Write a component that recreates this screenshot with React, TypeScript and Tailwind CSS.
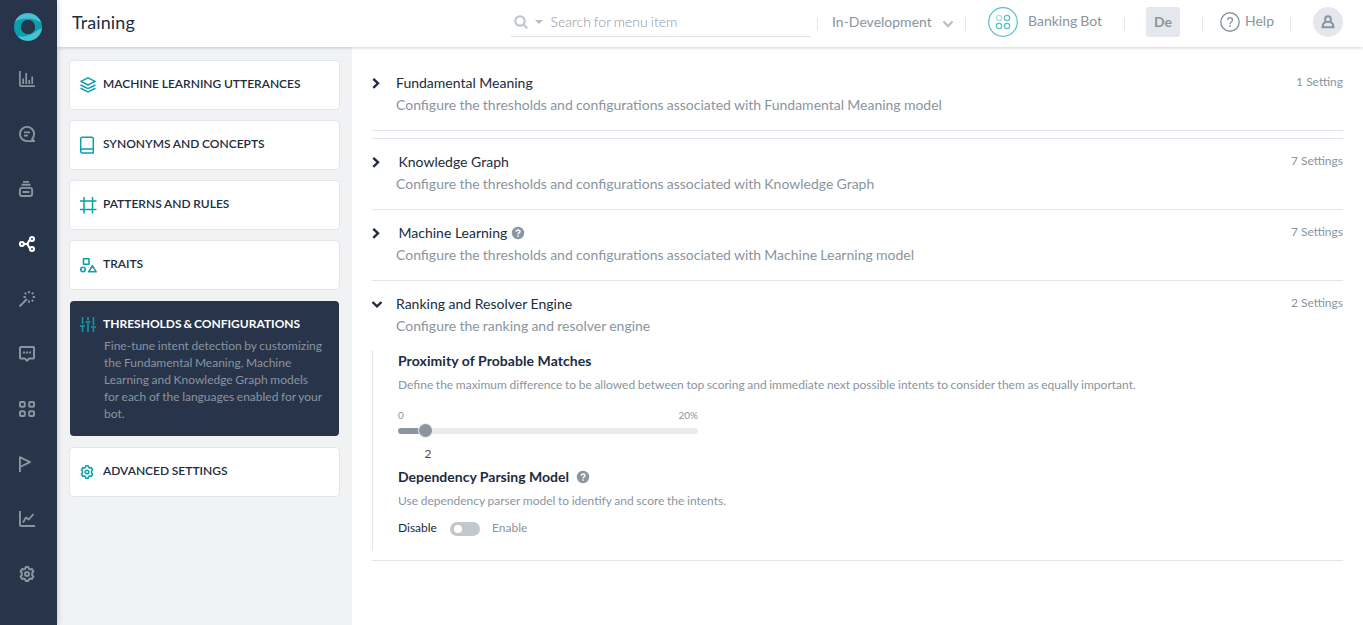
import React from "react";

type IconProps = { children: React.ReactNode; size?: string; sw?: number };

function Icon({ children, size = "size-4", sw = 1.8 }: IconProps) {
  return (
    <svg viewBox="0 0 16 16" className={`${size} block shrink-0 overflow-visible`} fill="none" stroke="currentColor" strokeWidth={sw} strokeLinejoin="round">
      {children}
    </svg>
  );
}

const gear = (
  <>
    <path d="M6.2 2.7 6.7 .9h2.6l.5 1.8 1.3.8 1.8-.5 1.500 2.500-1.200 1.300v2.400l1.200 1.300-1.500 2.500-1.800-.5-1.300.8-.5 1.800H6.700l-.5-1.800-1.300-.8-1.800.5-1.500-2.500 1.200-1.300V6.800L1.600 5.500 3.100 3l1.800.5z" />
    <circle cx="8" cy="8" r="2" />
  </>
);

const navIcons: React.ReactNode[] = [
  <Icon sw={1.7}><path d="M.9 0v14q0 1.200 1.200 1.200H16M4.200 13V7.500M7.200 13V2M10.200 13V9M13.200 13V5.500" /></Icon>,
  <Icon sw={1.9}><path d="M15.200 15.100H8A7.100 7.100 0 1 1 15.100 8c0 2-.8 3.700-2 5zM5 6.400h6M5 9.600h4" /></Icon>,
  <Icon sw={1.9}><path d="M4 .9h6M2.500 3.700h9M3 6.900h8q2.100 0 2.100 2.100v3.900q0 2.100-2.100 2.100H3Q.9 15 .9 12.900V9Q.9 6.900 3 6.900zM3.500 11h7" /></Icon>,
  <Icon sw={2.100}><circle cx="2.900" cy="8" r="2" /><circle cx="13" cy="3" r="2" /><circle cx="13" cy="13" r="2" /><path d="M5 8h3.500M11.200 3.800C9.500 4.500 9.500 6 8.500 8c1 2 1 3.500 2.700 4.200" /></Icon>,
  <Icon sw={1.900}><path d="M.5 15.500 8 8M10 0v2.200M10 9.500v2.300M4.500 6h2.300M13.700 6H16M5.700 1.700l1.500 1.500M14.300 1.700l-1.500 1.500M14.300 10.300l-1.500-1.500" /></Icon>,
  <Icon sw={2}><path d="M1.600 1h12.800l.6.600v10.400l-.6.600H10L8 14.700 6 12.600H1.600L1 12V1.600z" /><path d="M4 6.500h2M7 6.500h2M10 6.500h2" /></Icon>,
  <Icon sw={2}><rect x="1" y="1" width="4.800" height="4.800" rx="1" /><rect x="10.200" y="1" width="4.800" height="4.800" rx="1" /><rect x="1" y="10.200" width="4.800" height="4.800" rx="1" /><rect x="10.200" y="10.200" width="4.800" height="4.800" rx="1" /></Icon>,
  <Icon sw={1.9}><path d="M.95 16V1.200L11 6.200.95 11" /></Icon>,
  <Icon sw={1.9}><path d="M.95 0v13.900q0 1.150 1.150 1.150H16M4 11.500l3-5 2.700 2L14.500 3" /></Icon>,
  <Icon sw={2}>{gear}</Icon>,
];

function Logo() {
  return (
    <svg viewBox="0 0 28 28" className="size-7 shrink-0">
      <circle cx="14" cy="14" r="10.500" fill="none" stroke="#09a0ae" strokeWidth="7" />
      <path d="M1 8.500C5-.5 17-2.500 24 4.500c1.500 1.500 2.500 3.300 3 5C23 7 18 5.500 13 5.500 8.500 5.500 4 6.500 1 8.500z" fill="#4cc0d3" />
      <path d="M27.800 15.500C27 24 18 30 9 27c-2-.7-3.700-2-5-3.500 5 .5 11-.5 15.500-3.500 3.500-2.300 6-4 8.300-4.500z" fill="#4cc0d3" />
      <circle cx="14" cy="14" r="7" fill="#27344a" />
    </svg>
  );
}

type Item = { label: string; icon: React.ReactNode };

const items: Item[] = [
  { label: "MACHINE LEARNING UTTERANCES", icon: <Icon sw={1.500}><path d="M8 .8 15.100 4.400 8 8 .9 4.400zM.5 8 8 11.600 15.500 8M.5 11.300 8 14.900l7.500-3.600" /></Icon> },
  { label: "SYNONYMS AND CONCEPTS", icon: <Icon sw={1.500}><path d="M2.200.3h9.600q1.500 0 1.500 1.500V16H2.200Q.7 16 .7 14.500V1.800Q.7.3 2.200.3zM.7 14q0-2 2-2h10.600" /></Icon> },
  { label: "PATTERNS AND RULES", icon: <Icon sw={1.500}><path d="M4 0v16.500M12.500 0v16.500M0 4h16.500M0 12.500h16.500" /></Icon> },
  { label: "TRAITS", icon: <Icon sw={1.600}><rect x="3.500" y="1.700" width="5.500" height="5.500" /><circle cx="3" cy="12.500" r="2.200" /><path d="m12.500 8.800 3.700 6H8.700z" /></Icon> },
];

function Card({ item }: { item: Item }) {
  return (
    <div className="flex h-[50px] w-[271px] items-center rounded border border-[#e4e5ec] bg-white pl-2.5 text-[#202c40]">
      <span className="w-[23px] text-[#0d9fab]">{item.icon}</span>
      <span className="pb-0.5 text-[12px] font-semibold leading-4 [word-spacing:-0.3px]">{item.label}</span>
    </div>
  );
}

function HelpDot() {
  return (
    <svg viewBox="0 0 12 12" className="size-3 shrink-0 overflow-visible">
      <circle cx="6" cy="6" r="6.200" fill="#8a959f" />
      <path d="M4.100 4.800C4.200 2.500 8 2.500 8 4.500 8 5.900 6 5.700 6 7.200M6 8.200v1.500" fill="none" stroke="white" strokeWidth="1.500" />
    </svg>
  );
}

type RowProps = { title: string; text: string; count: string; indent?: boolean; help?: boolean; open?: boolean };

function Row({ title, text, count, indent, help, open }: RowProps) {
  return (
    <div className="flex pt-[13px]">
      <svg viewBox="0 0 10 20" className="h-5 w-2.5 shrink-0 overflow-visible" fill="none" stroke="#202c40" strokeWidth="2.400">
        <path d={open ? "M.5 8 5 12.300 9.500 8" : "M1.300 5.800 6 10.300 1.300 14.800"} />
      </svg>
      <div className="ml-3.5 flex-1 text-[14px] leading-5">
        <div className={`flex items-center text-[#202c40] ${indent ? "pl-[2.5px]" : ""}`}>
          <span className="mr-[5px]">{title}</span>
          {help && <HelpDot />}
        </div>
        <p className="mt-0.5 text-[#8a959f] [word-spacing:-0.35px]">{text}</p>
      </div>
      <span className="-mt-px text-[12px] leading-5 text-[#8a959f]">{count}</span>
    </div>
  );
}

function Sep({ className }: { className: string }) {
  return <i className={`h-3 w-px shrink-0 bg-[#dfe5ee] ${className}`} />;
}

export default function App() {
  return (
    <div className="flex h-[625px] w-[1363px] overflow-hidden bg-white font-['Lato',sans-serif] text-[#202c40]">
      <nav className="z-10 flex w-[57px] shrink-0 flex-col bg-[#27344a] pt-[13px] text-[#8a959f] shadow-[1px_0_5px_rgba(0,0,0,0.16)]">
        <div className="pl-3.5"><Logo /></div>
        <div className="mt-[30px] flex flex-col gap-[39px] pl-[19px]">
          {navIcons.map((icon, i) => (
            <span key={i} className={i === 3 ? "text-white" : ""}>{icon}</span>
          ))}
        </div>
      </nav>
      <div className="flex min-w-0 flex-1 flex-col">
        <header className="z-[5] flex h-[47px] shrink-0 items-start bg-white shadow-[0_1px_3px_rgba(0,0,0,0.18)]">
          <h1 className="ml-[15px] mt-2.5 w-[439px] text-[18px] leading-6 tracking-[0.1px]">Training</h1>
          <div className="flex h-[37px] w-[300px] items-center border-b border-[#dfe3ea] pl-[3px] pt-2 text-[#8a959f]">
            <svg viewBox="0 0 14 14" className="size-3.5" fill="none" stroke="#c2c7cd" strokeWidth="2.300">
              <circle cx="6" cy="6" r="4.700" /><path d="m9.500 9.500 3.700 3.700" />
            </svg>
            <svg viewBox="0 0 8 4" className="ml-[7px] h-1 w-2"><path d="M0 0h8L4 4z" fill="#b6bdc4" /></svg>
            <span className="ml-[7.500px] text-[14px] font-light leading-5 [word-spacing:-0.8px]">Search for menu item</span>
          </div>
          <div className="flex h-11 items-center text-[14px] leading-5 text-[#8a959f]">
            <Sep className="ml-1.5 mt-[3px]" />
            <span className="ml-3.5 w-[110px]">In-Development</span>
            <svg viewBox="0 0 12 8" className="mt-[3px] h-2 w-3" fill="none" stroke="#b9c0c6" strokeWidth="2.300"><path d="m1.500 1.500 4.500 4.500 4.500-4.500" /></svg>
            <Sep className="ml-[11px] mt-[3px]" />
            <svg viewBox="0 0 30 30" className="ml-[22px] size-[30px]" fill="none" stroke="#56bfc8" strokeWidth="1.200">
              <circle cx="15" cy="15" r="14.300" />
              <circle cx="11" cy="11" r="2.700" opacity=".5" /><circle cx="19" cy="11" r="2.700" /><circle cx="11" cy="19" r="2.700" /><circle cx="19" cy="19" r="2.700" />
            </svg>
            <span className="ml-2.5 w-[96px] pb-0.5 [word-spacing:-0.5px]">Banking Bot</span>
            <Sep className="mt-[3px]" />
            <span className="ml-[21px] flex h-[30px] w-[34px] items-center justify-center rounded-[3px] bg-[#e4e8ed] font-bold">De</span>
            <Sep className="ml-[22px] mt-[3px]" />
            <svg viewBox="0 0 20 20" className="ml-[17px] size-5" fill="none" stroke="#8a959f" strokeWidth="1.400">
              <circle cx="10" cy="10" r="9.200" /><path d="M7.500 8C7.500 4.800 12.500 4.900 12.500 8c0 2-2.500 2-2.500 4.200M10 13.300v1.700" />
            </svg>
            <span className="ml-[5px] w-[45px] pb-0.5">Help</span>
            <Sep className="mt-[3px]" />
            <span className="ml-[22px] flex size-[30px] items-center justify-center rounded-full bg-[#e4e8ed]">
              <svg viewBox="0 0 14 14" className="size-3.5 overflow-visible" fill="none" stroke="#8a959f" strokeWidth="2"><circle cx="7" cy="4.200" r="2.900" /><path d="M4.500 6.800C2.500 8 1.500 10 1.500 12.200h11c0-2.200-1-4.200-3-5.400" /></svg>
            </span>
          </div>
        </header>
        <div className="flex min-h-0 flex-1">
          <aside className="flex w-[295px] shrink-0 flex-col gap-2.5 bg-[#f1f2f4] pl-3 pt-[13px]">
            {items.map((item) => <Card key={item.label} item={item} />)}
            <div className="mb-px ml-px mt-px flex h-[135px] w-[269px] rounded bg-[#27344a] pl-2.5 pt-[15px]">
              <span className="w-[23px] pt-px text-[#0d9fab]">
                <Icon sw={1.500}><path d="M2.500 0v7M2.500 9.500V15M8 0v3.500M8 6v9M13.500 0v8.500M13.500 11v4M0 9h5M5.500 5h5M11 10h5" /></Icon>
              </span>
              <div>
                <h2 className="text-[12px] font-bold leading-4 text-white [word-spacing:-1px]">THRESHOLDS &amp; CONFIGURATIONS</h2>
                <p className="ml-px mt-[5px] whitespace-nowrap text-[12px] leading-[17px] text-[#8a959f] [word-spacing:-0.45px]">
                  Fine-tune intent detection by customizing<br />the Fundamental Meaning, Machine<br />Learning and Knowledge Graph models<br />for each of the languages enabled for your<br />bot.
                </p>
              </div>
            </div>
            <Card item={{ label: "ADVANCED SETTINGS", icon: <Icon size="size-3.5" sw={1.800}>{gear}</Icon> }} />
          </aside>
          <main className="flex flex-1 flex-col pl-5 pr-5 pt-[13px]">
            <section className="h-[71px] border-b border-[#e4e5ec]">
              <Row title="Fundamental Meaning" text="Configure the thresholds and configurations associated with Fundamental Meaning model" count="1 Setting" />
            </section>
            <section className="mt-[7px] h-[72px] border-y border-[#e4e5ec]">
              <Row indent title="Knowledge Graph" text="Configure the thresholds and configurations associated with Knowledge Graph" count="7 Settings" />
            </section>
            <section className="h-[71px] border-b border-[#e4e5ec]">
              <Row indent help title="Machine Learning" text="Configure the thresholds and configurations associated with Machine Learning model" count="7 Settings" />
            </section>
            <section className="h-[280px] border-b border-[#e4e5ec]">
              <Row open title="Ranking and Resolver Engine" text="Configure the ranking and resolver engine" count="2 Settings" />
              <div className="mt-3.5 h-[200px] border-l border-[#e4e5ec] pl-[25px]">
                <h3 className="pt-px text-[14px] font-bold leading-5 tracking-[0.07px]">Proximity of Probable Matches</h3>
                <p className="mt-1 text-[12px] leading-5 text-[#8a959f] [word-spacing:-0.45px]">Define the maximum difference to be allowed between top scoring and immediate next possible intents to consider them as equally important.</p>
                <div className="mt-3.5 flex w-[300px] justify-between text-[10px] leading-3 text-[#8a959f]"><span>0</span><span>20%</span></div>
                <div className="mt-[3px] flex h-[13px] w-[300px] items-center">
                  <i className="h-1.5 w-[21px] rounded-l-[3px] bg-[#8a959f]" />
                  <i className="size-[13px] rounded-full bg-[#8a959f] shadow-[0_0_1px_1px_#e8eaec]" />
                  <i className="h-1.5 flex-1 rounded-r-[3px] bg-[#ebebeb]" />
                </div>
                <div className="ml-[26.500px] mt-[9px] text-[12px] leading-4 text-[#464a50]">2</div>
                <h3 className="mt-[5px] flex items-center gap-2 text-[14px] font-bold leading-5">Dependency Parsing Model <HelpDot /></h3>
                <p className="mt-1 text-[12px] leading-5 text-[#8a959f] [word-spacing:-0.45px]">Use dependency parser model to identify and score the intents.</p>
                <div className="mt-[7px] flex h-5 items-center text-[12px] leading-5">
                  <span className="w-[52px]">Disable</span>
                  <span className="mt-0.5 flex h-3.5 w-[30px] items-center rounded-full bg-[#c3c8cd] pl-1"><i className="size-2 rounded-full bg-white" /></span>
                  <span className="ml-3 text-[#8a959f]">Enable</span>
                </div>
              </div>
            </section>
          </main>
        </div>
      </div>
    </div>
  );
}
